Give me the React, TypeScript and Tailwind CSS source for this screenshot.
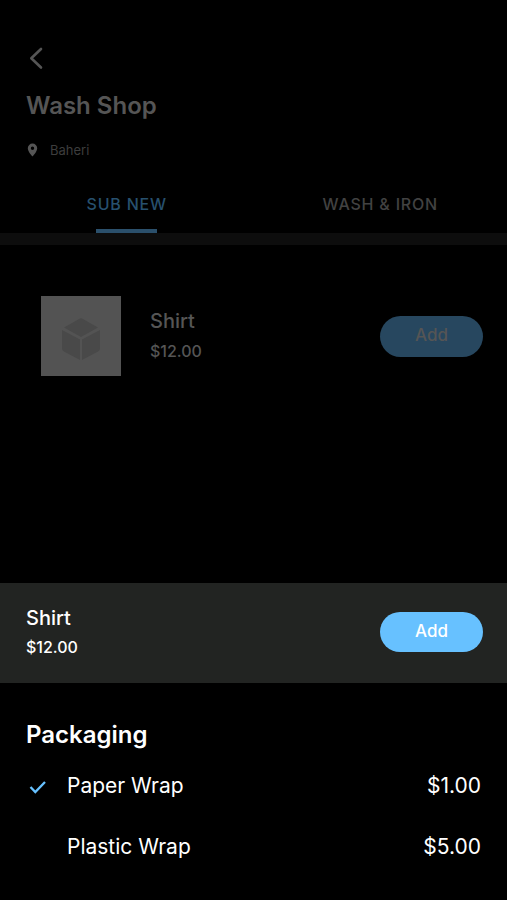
import { useState } from "react";

const tabs = ["SUB NEW", "WASH & IRON"];

const packaging = [
  { id: "paper", name: "Paper Wrap", price: "$1.00" },
  { id: "plastic", name: "Plastic Wrap", price: "$5.00" },
];

function BackIcon() {
  return (
    <svg width="24" height="24" viewBox="0 0 24 24" fill="none" stroke="currentColor" strokeWidth="2.6" strokeLinecap="round" strokeLinejoin="round">
      <path d="M15 3 5.300 12.300 15 21.500" />
    </svg>
  );
}

function PinIcon() {
  return (
    <svg width="14" height="14" viewBox="0 0 14 14" fill="currentColor">
      <path fillRule="evenodd" d="M6.500 0.500a4.700 4.700 0 0 0-4.700 4.700C1.800 8.700 6.500 13.500 6.500 13.500s4.700-4.800 4.700-8.300A4.700 4.700 0 0 0 6.500 0.500zm0 6.400a1.700 1.700 0 1 1 0-3.400 1.700 1.700 0 0 1 0 3.400z" />
    </svg>
  );
}

function BoxIcon() {
  return (
    <svg width="40" height="44" viewBox="0 0 40 44" fill="currentColor">
      <path d="M19 1.500q1-.6 2 0L37 10.500 20 20 3 10.500z" />
      <path d="M1 13 19 22.500V43L3 34.500q-2-1-2-3z" />
      <path d="M39 13 21 22.500V43l16-8.500q2-1 2-3z" />
    </svg>
  );
}

function CheckIcon() {
  return (
    <svg width="24" height="24" viewBox="0 0 24 24" fill="none" stroke="currentColor" strokeWidth="2.300">
      <path d="M4.500 13 9.300 18 19 8" />
    </svg>
  );
}

export default function App() {
  const [tab, setTab] = useState(0);
  const [wrap, setWrap] = useState("paper");

  return (
    <div className="flex min-h-screen flex-col justify-between bg-black font-['Inter',sans-serif]">
      <main className="text-[#555555]">
        <header className="px-[26px] pt-[46px]">
          <button type="button" aria-label="Back" className="block">
            <BackIcon />
          </button>
          <h1 className="mt-5 text-2xl font-semibold leading-8">Wash Shop</h1>
          <p className="mt-[18px] flex items-center gap-2.5 text-[13px] leading-5">
            <PinIcon />
            <span className="text-[#3d3d3d]">Baheri</span>
          </p>
        </header>

        <nav className="mt-7 grid grid-cols-2 border-b-[12px] border-[#0d0d0d]">
          {tabs.map((name, i) => (
            <button
              key={name}
              type="button"
              onClick={() => setTab(i)}
              className={
                i === tab
                  ? "flex flex-col items-center text-base font-medium tracking-wider text-[#27506e]"
                  : "flex flex-col items-center text-base font-medium tracking-wider text-[#424242]"
              }
            >
              <span className="py-1 leading-6">{name}</span>
              <span className={i === tab ? "mt-[9px] h-1 w-[61px] bg-[#2b506c]" : "mt-[9px] h-1 w-[61px]"} />
            </button>
          ))}
        </nav>

        <section className="flex items-center pt-[51px] pr-6 pl-[41px]">
          <div className="flex size-20 items-center justify-center bg-[#535353] pt-1.5 text-[#494949]">
            <BoxIcon />
          </div>
          <div className="ml-[29px] flex-1">
            <h2 className="text-xl font-medium leading-[30px]">Shirt</h2>
            <p className="text-base font-medium leading-[30px]">$12.00</p>
          </div>
          <button type="button" className="h-[41px] w-[103px] rounded-full bg-[#27475f] text-[17px] font-medium text-[#555555]">
            Add
          </button>
        </section>
      </main>

      <div role="dialog" aria-label="Packaging" className="text-white">
        <div className="flex items-center justify-between bg-[#222422] pt-5 pr-6 pb-[22px] pl-[26px]">
          <div>
            <h2 className="text-xl font-medium leading-[30px]">Shirt</h2>
            <p className="text-base font-medium leading-7">$12.00</p>
          </div>
          <button type="button" className="h-10 w-[103px] rounded-full bg-[#67c1ff] text-[17px] font-medium">
            Add
          </button>
        </div>
        <fieldset className="px-[26px] pt-9 pb-[23px]">
          <legend className="contents">
            <span className="block text-2xl font-semibold leading-8">Packaging</span>
          </legend>
          <div className="mt-1">
            {packaging.map((item) => (
              <label key={item.id} className="flex h-[61px] items-center text-[21px]">
                <input
                  type="radio"
                  name="packaging"
                  value={item.id}
                  checked={wrap === item.id}
                  onChange={() => setWrap(item.id)}
                  className="peer size-0 appearance-none"
                />
                <span className="invisible mr-[17px] text-[#67c1ff] peer-checked:visible">
                  <CheckIcon />
                </span>
                <span>{item.name}</span>
                <span className="ml-auto">{item.price}</span>
              </label>
            ))}
          </div>
        </fieldset>
      </div>
    </div>
  );
}
